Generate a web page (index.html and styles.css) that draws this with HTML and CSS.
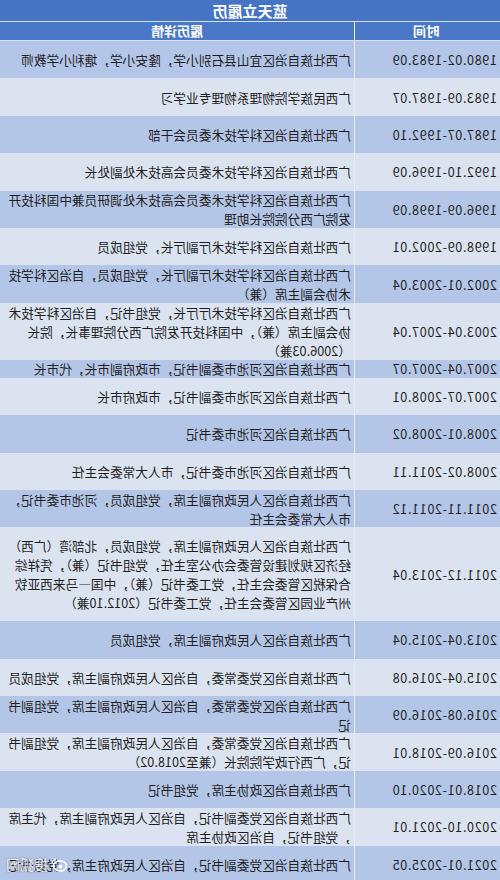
FILE: index.html
```html
<!DOCTYPE html>
<html lang="zh">
<head>
<meta charset="utf-8">
<title>蓝天立履历</title>
<link rel="stylesheet" href="styles.css">
</head>
<body>
<div class="sheet">
  <div class="title">蓝天立履历</div>
  <div class="head">
    <div class="time">时间</div>
    <div class="detail">履历详情</div>
  </div>
  <div class="row dark"><div class="time">1980.02-1983.09</div><div class="detail">广西壮族自治区宜山县石别小学，隆安小学，塘利小学教师</div></div>
  <div class="row light"><div class="time">1983.09-1987.07</div><div class="detail">广西民族学院物理系物理专业学习</div></div>
  <div class="row dark"><div class="time">1987.07-1992.10</div><div class="detail">广西壮族自治区科学技术委员会干部</div></div>
  <div class="row light"><div class="time">1992.10-1996.09</div><div class="detail">广西壮族自治区科学技术委员会高技术处副处长</div></div>
  <div class="row dark"><div class="time">1996.09-1998.09</div><div class="detail">广西壮族自治区科学技术委员会高技术处调研员兼中国科技开<br>发院广西分院院长助理</div></div>
  <div class="row light"><div class="time">1998.09-2002.01</div><div class="detail">广西壮族自治区科学技术厅副厅长，党组成员</div></div>
  <div class="row dark"><div class="time">2002.01-2003.04</div><div class="detail">广西壮族自治区科学技术厅副厅长，党组成员，自治区科学技<br>术协会副主席（兼）</div></div>
  <div class="row light tall3"><div class="time">2003.04-2007.04</div><div class="detail">广西壮族自治区科学技术厅厅长，党组书记，自治区科学技术<br>协会副主席（兼），中国科技开发院广西分院理事长，院长<br>（2006.03兼）</div></div>
  <div class="row dark short"><div class="time">2007.04-2007.07</div><div class="detail">广西壮族自治区河池市委副书记，市政府副市长，代市长</div></div>
  <div class="row light"><div class="time">2007.07-2008.01</div><div class="detail">广西壮族自治区河池市委副书记，市政府市长</div></div>
  <div class="row dark"><div class="time">2008.01-2008.02</div><div class="detail">广西壮族自治区河池市委书记</div></div>
  <div class="row light"><div class="time">2008.02-2011.11</div><div class="detail">广西壮族自治区河池市委书记，市人大常委会主任</div></div>
  <div class="row dark"><div class="time">2011.11-2011.12</div><div class="detail">广西壮族自治区人民政府副主席，党组成员，河池市委书记，<br>市人大常委会主任</div></div>
  <div class="row light tall4"><div class="time">2011.12-2013.04</div><div class="detail">广西壮族自治区人民政府副主席，党组成员，北部湾（广西）<br>经济区规划建设管委会办公室主任，党组书记（兼），凭祥综<br>合保税区管委会主任，党工委书记（兼），中国—马来西亚钦<br>州产业园区管委会主任，党工委书记（2012.10兼）</div></div>
  <div class="row dark"><div class="time">2013.04-2015.04</div><div class="detail">广西壮族自治区人民政府副主席，党组成员</div></div>
  <div class="row light"><div class="time">2015.04-2016.08</div><div class="detail">广西壮族自治区党委常委，自治区人民政府副主席，党组成员</div></div>
  <div class="row dark"><div class="time">2016.08-2016.09</div><div class="detail">广西壮族自治区党委常委，自治区人民政府副主席，党组副书<br>记</div></div>
  <div class="row light"><div class="time">2016.09-2018.01</div><div class="detail">广西壮族自治区党委常委，自治区人民政府副主席，党组副书<br>记，广西行政学院院长（兼至2018.02）</div></div>
  <div class="row dark"><div class="time">2018.01-2020.10</div><div class="detail">广西壮族自治区政协主席，党组书记</div></div>
  <div class="row light"><div class="time">2020.10-2021.01</div><div class="detail">广西壮族自治区党委副书记，自治区人民政府副主席，代主席<br>，党组书记，自治区政协主席</div></div>
  <div class="row dark"><div class="time">2021.01-2025.05</div><div class="detail">广西壮族自治区党委副书记，自治区人民政府主席，党组书记</div></div>
  <div class="mark"><svg class="mark-logo" width="16" height="14" viewBox="0 0 16 14"><ellipse cx="7" cy="8" rx="6.5" ry="5" fill="none" stroke="#ffffff" stroke-width="1.6"/><circle cx="6.5" cy="8.5" r="2" fill="#ffffff"/><path d="M11 1.5a4 4 0 0 1 4 4" fill="none" stroke="#ffffff" stroke-width="1.4"/></svg><span>搜狐网</span></div>
</div>
</body>
</html>
```

FILE: styles.css
```css
html, body {
  margin: 0;
  padding: 0;
  background: #dbe3f1;
}

.sheet {
  position: relative;
  width: 500px;
  height: 880px;
  overflow: hidden;
  transform: scaleX(-1);
  font-family: "Noto Sans CJK SC", "Noto Sans", sans-serif;
  color: #1f1f1f;
  font-size: 12.7px;
  line-height: 19px;
  background: #b4c6e7;
}

.title {
  height: 21px;
  border-bottom: 1px solid #d6e0f2;
  background: #4674c5;
  color: #ffffff;
  font-weight: bold;
  font-size: 15px;
  line-height: 21px;
  text-align: center;
}

.head {
  display: flex;
  height: 18px;
  border-bottom: 1px solid #d6e0f2;
  background: #4a78c8;
  color: #ffffff;
  font-weight: bold;
  font-size: 13px;
  line-height: 18px;
}

.head .time,
.head .detail {
  justify-content: center;
}

.row {
  display: flex;
  height: 37.4px;
}

.row.tall3 { height: 57px; }
.row.tall4 { height: 94px; }
.row.short { height: 18px; line-height: 17px; }

.dark { background: #b4c6e7; }
.light { background: #dbe3f1; }

.time {
  display: flex;
  align-items: center;
  width: 145px;
  flex: none;
  padding-left: 3px;
  box-sizing: border-box;
  letter-spacing: 0.6px;
  white-space: nowrap;
}

.detail {
  display: flex;
  align-items: center;
  flex: 1;
  padding: 0 3px;
  border-left: 1px solid #e6ecf7;
  white-space: nowrap;
}

.mark {
  position: absolute;
  right: 6px;
  bottom: 6px;
  display: flex;
  align-items: center;
  gap: 3px;
  color: rgba(255, 255, 255, 0.85);
  font-size: 14px;
  text-shadow: 0 0 2px rgba(60, 60, 60, 0.6);
}

.mark-logo {
  display: block;
}
```
